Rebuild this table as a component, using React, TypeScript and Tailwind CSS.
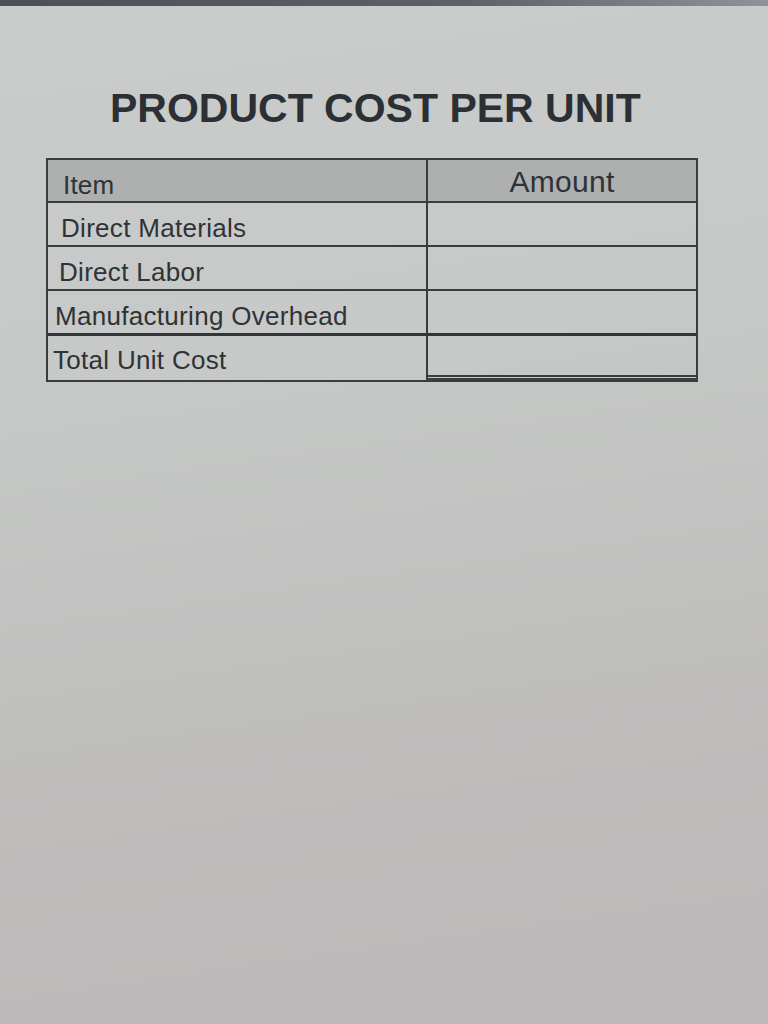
import React from 'react';

const rows = [
  { label: 'Direct Materials', pad: 'pl-[13px]' },
  { label: 'Direct Labor', pad: 'pl-[11px]' },
  { label: 'Manufacturing Overhead', pad: 'pl-[7px]' },
];

export default function App() {
  return (
    <div className="min-h-[1024px] w-full bg-[linear-gradient(172deg,#c9ccca_0%,#c6c9c7_35%,#bebdbc_70%,#bab8b8_100%)] font-['Liberation_Sans',Arial,sans-serif]">
      <div className="h-[6px] w-full bg-[linear-gradient(90deg,#4c5056_0%,#5d6166_60%,#8f9397_100%)]" />
      <div className="pt-[82px]">
        <h1 className="ml-[110px] text-[41px] font-bold leading-none text-[#2c2f34]">
          PRODUCT COST PER UNIT
        </h1>
      </div>

      <div className="ml-[46px] mt-[29px] w-[652px] border-2 border-[#3a3c3f] text-[#2f3236]">
        {/* header */}
        <div className="flex h-[43px] border-b-2 border-[#3a3c3f] bg-[#adb0ae]">
          <div className="w-[380px] border-r-2 border-[#3a3c3f] pl-[15px] pt-[12px] text-[26px] leading-none tracking-[0.2px]">
            Item
          </div>
          <div className="flex-1 pt-[7px] text-center text-[30px] leading-none tracking-[0.3px]">
            Amount
          </div>
        </div>

        {rows.map((r, i) => (
          <div
            key={r.label}
            className={
              i === rows.length - 1
                ? 'flex h-[45px] border-b-[3px] border-[#333538]'
                : 'flex h-[44px] border-b-2 border-[#3a3c3f]'
            }
          >
            <div
              className={`w-[380px] border-r-2 border-[#3a3c3f] ${r.pad} pt-[12px] text-[26px] leading-none tracking-[0.3px]`}
            >
              {r.label}
            </div>
            <div className="flex-1" />
          </div>
        ))}

        {/* total */}
        <div className="flex h-[44px]">
          <div className="w-[380px] border-r-2 border-[#3a3c3f] pl-[5px] pt-[11px] text-[26px] leading-none tracking-[0.3px]">
            Total Unit Cost
          </div>
          <div className="flex-1 border-b-[5px] border-double border-[#3a3c3f]" />
        </div>
      </div>
    </div>
  );
}
